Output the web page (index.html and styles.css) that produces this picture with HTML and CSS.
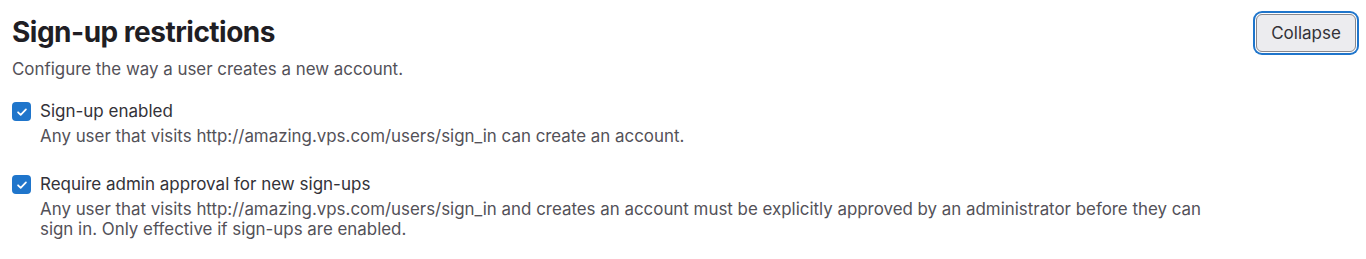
FILE: index.html
```html
<!DOCTYPE html>
<html>
<head>
<meta charset="utf-8">
<link rel="stylesheet" href="styles.css">
</head>
<body>
<section class="settings">
  <div class="settings-header">
    <div class="header-text">
      <h2 class="title">Sign-up restrictions</h2>
      <p class="subtitle">Configure the way a user creates a new account.</p>
    </div>
    <button class="btn" type="button">Collapse</button>
  </div>
  <div class="settings-body">
    <div class="check-row">
      <span class="checkbox"><svg viewBox="0 0 16 16" width="14" height="14"><path d="M3.5 8.3l3 3 6-6.3" fill="none" stroke="#fff" stroke-width="2" stroke-linecap="round" stroke-linejoin="round"/></svg></span>
      <div class="check-text">
        <div class="check-label">Sign-up enabled</div>
        <p class="help">Any user that visits http://amazing.vps.com/users/sign_in can create an account.</p>
      </div>
    </div>
    <div class="check-row">
      <span class="checkbox"><svg viewBox="0 0 16 16" width="14" height="14"><path d="M3.5 8.3l3 3 6-6.3" fill="none" stroke="#fff" stroke-width="2" stroke-linecap="round" stroke-linejoin="round"/></svg></span>
      <div class="check-text">
        <div class="check-label">Require admin approval for new sign-ups</div>
        <p class="help">Any user that visits http://amazing.vps.com/users/sign_in and creates an account must be explicitly approved by an administrator before they can sign in. Only effective if sign-ups are enabled.</p>
      </div>
    </div>
  </div>
</section>
</body>
</html>
```

FILE: styles.css
```css
* { box-sizing: border-box; }
html, body { margin: 0; padding: 0; background: #fff; }
body {
  font-family: Inter, "Noto Sans", sans-serif;
  color: #333238;
}
.settings { padding: 12px 10px 0 12px; }
.settings-header {
  display: flex;
  justify-content: space-between;
  align-items: flex-start;
}
.title {
  margin: 0;
  font-size: 28px;
  line-height: 40px;
  font-weight: 700;
  color: #1f1e24;
  letter-spacing: -0.5px;
}
.subtitle {
  margin: 6px 0 0;
  font-size: 16.9px;
  line-height: 22px;
  color: #535158;
}
.btn {
  margin-top: 2px;
  width: 100px;
  height: 38px;
  padding: 0;
  border: 1px solid #89888d;
  border-radius: 6px;
  background: #ececef;
  color: #333238;
  font-family: inherit;
  font-size: 17px;
  box-shadow: 0 0 0 1px #fff, 0 0 0 3px #1f75cb;
}
.settings-body { margin-top: 19px; }
.check-row {
  display: flex;
  gap: 9px;
  margin-bottom: 26px;
}
.checkbox {
  flex: none;
  width: 19px;
  height: 19px;
  margin-top: 3px;
  border-radius: 4px;
  background: #1f75cb;
  display: flex;
  align-items: center;
  justify-content: center;
}
.check-label {
  font-size: 17px;
  line-height: 24px;
  color: #333238;
}
.help {
  margin: 3px 0 0;
  font-size: 16.9px;
  line-height: 20px;
  color: #535158;
  max-width: 1180px;
}
```
